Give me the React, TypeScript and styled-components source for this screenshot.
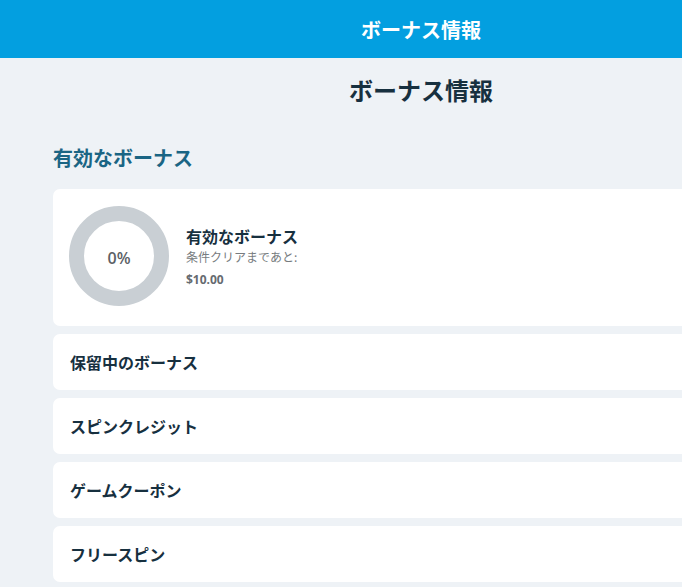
import styled, { createGlobalStyle } from 'styled-components'

const GlobalStyle = createGlobalStyle`
    html, body {
        margin: 0;
        padding: 0;
        background: #eef2f6;
        overflow: hidden;
    }
    body {
        font-family: 'Noto Sans CJK JP', 'Noto Sans', 'Liberation Sans', sans-serif;
    }
`

const otherBonuses = ['保留中のボーナス', 'スピンクレジット', 'ゲームクーポン', 'フリースピン']

const ProgressRing = ({ percent }: { percent: number }) => {
    const r = 42.5
    const c = 2 * Math.PI * r
    return (
        <RingWrap>
            <svg width='100' height='100' viewBox='0 0 100 100'>
                <circle cx='50' cy='50' r={r} fill='none' stroke='#c9cfd4' strokeWidth='15' />
                {percent > 0 && (
                    <circle
                        cx='50'
                        cy='50'
                        r={r}
                        fill='none'
                        stroke='#039fe0'
                        strokeWidth='15'
                        strokeDasharray={`${(c * percent) / 100} ${c}`}
                        transform='rotate(-90 50 50)'
                    />
                )}
            </svg>
            <RingLabel>{percent}%</RingLabel>
        </RingWrap>
    )
}

export default function App() {
    return (
        <Page>
            <GlobalStyle />
            <TopBar>ボーナス情報</TopBar>
            <PageTitle>ボーナス情報</PageTitle>
            <Section>
                <SectionTitle>有効なボーナス</SectionTitle>
                <ActiveCard>
                    <ProgressRing percent={0} />
                    <ActiveInfo>
                        <ActiveName>有効なボーナス</ActiveName>
                        <ActiveHint>条件クリアまであと:</ActiveHint>
                        <ActiveAmount>$10.00</ActiveAmount>
                    </ActiveInfo>
                </ActiveCard>
                {otherBonuses.map((label) => (
                    <RowCard key={label}>{label}</RowCard>
                ))}
            </Section>
        </Page>
    )
}

// the page is wider than the window, the right side gets cut off
const Page = styled.div`
    width: 842px;
    min-height: 587px;
    background: #eef2f6;
`

const TopBar = styled.header`
    height: 58px;
    background: #039fe0;
    color: #ffffff;
    font-size: 20px;
    font-weight: 700;
    display: flex;
    align-items: center;
    justify-content: center;
`

const PageTitle = styled.h1`
    margin: 0;
    height: 62px;
    display: flex;
    align-items: center;
    justify-content: center;
    font-size: 24px;
    font-weight: 700;
    color: #17303f;
`

const Section = styled.section`
    padding: 0 53px;
    display: flex;
    flex-direction: column;
    gap: 8px;
`

const SectionTitle = styled.h2`
    margin: 25px 0 10px;
    font-size: 20px;
    font-weight: 700;
    color: #1a6584;
    line-height: 26px;
`

const ActiveCard = styled.div`
    background: #ffffff;
    border-radius: 7px;
    height: 137px;
    padding: 0 16px;
    box-sizing: border-box;
    display: flex;
    align-items: center;
    gap: 17px;
`

const RingWrap = styled.div`
    position: relative;
    width: 100px;
    height: 100px;
    flex-shrink: 0;
    margin-top: -3px;
`

const RingLabel = styled.span`
    position: absolute;
    inset: 0;
    display: flex;
    align-items: center;
    justify-content: center;
    padding-top: 3px;
    font-family: 'Open Sans', 'Liberation Sans', sans-serif;
    font-size: 16px;
    font-weight: 600;
    color: #5c6166;
`

const ActiveInfo = styled.div`
    display: flex;
    flex-direction: column;
    margin-top: -2px;
`

const ActiveName = styled.div`
    font-size: 16px;
    font-weight: 700;
    color: #17303f;
    line-height: 22px;
`

const ActiveHint = styled.div`
    font-size: 12px;
    color: #777c80;
    line-height: 19px;
`

const ActiveAmount = styled.div`
    font-family: 'Open Sans', 'Liberation Sans', sans-serif;
    font-size: 12px;
    font-weight: 700;
    color: #666b70;
    line-height: 17px;
    margin-top: 5px;
`

const RowCard = styled.div`
    background: #ffffff;
    border-radius: 7px;
    height: 56px;
    padding: 0 17px;
    display: flex;
    align-items: center;
    font-size: 16px;
    font-weight: 700;
    color: #17303f;
`
